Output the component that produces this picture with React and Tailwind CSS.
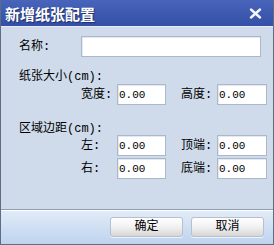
const label = { fontFamily: '"Liberation Mono", "Noto Sans CJK SC", monospace' }

function Field({ value, width }) {
  return (
    <input
      readOnly
      value={value}
      className={`${width} h-[21px] border border-[#a9b8cc] bg-white pl-px text-[11px] text-black outline-none shadow-[inset_1px_1px_0_#e4e9f0]`}
      style={label}
    />
  )
}

function PairRow({ a, b }) {
  return (
    <div className="ml-[62px] flex h-[21px] items-center text-[12px] text-black" style={label}>
      <span className="w-[36px]">{a}:</span>
      <Field value="0.00" width="w-[49px]" />
      <span className="ml-[15px] w-[36px]">{b}:</span>
      <Field value="0.00" width="w-[50px]" />
    </div>
  )
}

function Button({ children }) {
  return (
    <button className="flex h-[20px] w-[73px] items-center justify-center rounded-[3px] border border-[#b7c0cc] bg-gradient-to-b from-white via-[#f1f1f1] to-[#d6d6d6] text-[12px] leading-none text-black shadow-[0_1px_0_#eef3fa]" style={label}>
      {children}
    </button>
  )
}

export default function App() {
  return (
    <div className="flex h-[245px] w-[274px] flex-col border-x border-b border-[#5d6d86] bg-[#cfdbeb]">
      {/* Title bar */}
      <div className="flex h-[26px] shrink-0 items-center justify-between bg-gradient-to-b from-[#4865bb] via-[#3d59b0] to-[#3551a7] pl-[4px] pr-[11px]">
        <span className="text-[15px] font-bold leading-none text-white [text-shadow:1px_1px_1px_#1d2f6a]" style={{ fontFamily: '"Noto Sans CJK SC", sans-serif' }}>
          新增纸张配置
        </span>
        <svg width="13" height="11" viewBox="0 0 13 11" className="mt-px">
          <path d="M2 1.5 L11 9.5 M11 1.5 L2 9.5" stroke="#f4f6fc" strokeWidth="2.4" strokeLinecap="round" />
        </svg>
      </div>

      {/* Body */}
      <div className="flex-1 border-t border-[#e6edf6] pl-[18px] pt-[9px]">
        <div className="flex h-[21px] items-center text-[12px] text-black" style={label}>
          <span className="w-[62px]">名称:</span>
          <Field value="" width="w-[180px]" />
        </div>

        <div className="mt-[14px] text-[12px] leading-[12px] text-black" style={label}>纸张大小(cm):</div>
        <div className="mt-px">
          <PairRow a="宽度" b="高度" />
        </div>

        <div className="mt-[19px] text-[12px] leading-[11px] text-black" style={label}>区域边距(cm):</div>
        <div className="flex flex-col gap-[2px]">
          <PairRow a="左" b="顶端" />
          <PairRow a="右" b="底端" />
        </div>
      </div>

      {/* Footer */}
      <div className="flex h-[35px] shrink-0 justify-end gap-[8px] border-t border-[#8e9db3] bg-gradient-to-b from-[#e2ecf8] to-[#bed3ee] pr-[9px] pt-[7px] shadow-[inset_0_1px_0_#ffffff]">
        <Button>确定</Button>
        <Button>取消</Button>
      </div>
    </div>
  )
}
